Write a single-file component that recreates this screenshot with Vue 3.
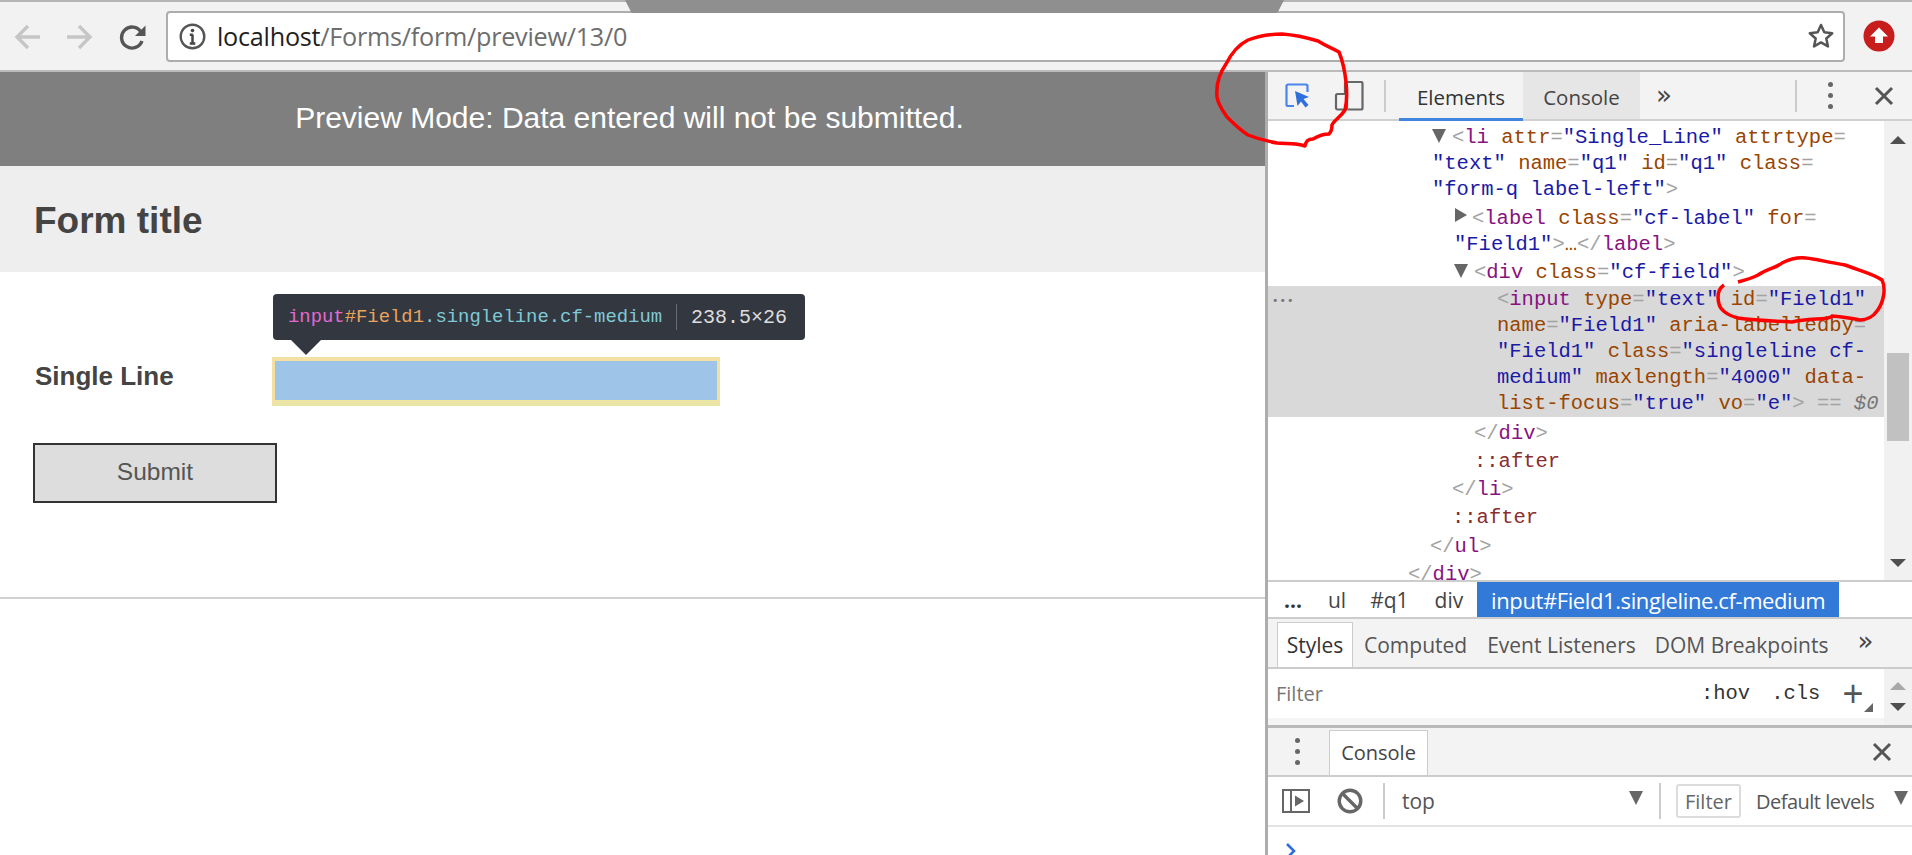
<script setup>
</script>

<template>
  <div class="app">
    <header class="browser">
      <div class="active-tab"></div>
      <svg class="nav first" width="28" height="28" viewBox="0 0 28 28"><path d="M26 14H4M14 3 3 14l11 11" fill="none" stroke="#c6c6c6" stroke-width="3.4"/></svg>
      <svg class="nav fwd" width="28" height="28" viewBox="0 0 28 28"><path d="M2 14h22M14 3l11 11-11 11" fill="none" stroke="#c6c6c6" stroke-width="3.4"/></svg>
      <svg class="nav reload" width="28" height="28" viewBox="0 0 28 28"><path d="M23 18a10.500 10.500 0 1 1-1-9" fill="none" stroke="#555" stroke-width="3.400"/><path d="M26.500 2.500V13h-10.500z" fill="#555"/></svg>
      <div class="omnibox">
        <svg class="info" width="27" height="27" viewBox="0 0 27 27"><circle cx="13.500" cy="13.500" r="11.800" fill="none" stroke="#555" stroke-width="2.400"/><path d="M13.500 11.500v9M10.800 11.800h3M10.800 20.500h5.500" fill="none" stroke="#444" stroke-width="2.500"/><circle cx="13.500" cy="7.500" r="1.800" fill="#444"/></svg>
        <span class="url"><span class="host">localhost</span>/Forms/form/preview/13/0</span>
        <svg class="star" width="28" height="28" viewBox="0 0 28 28"><path d="m14 3 3.300 7.300 7.900.9-5.900 5.300 1.700 7.900L14 20.400l-7 4 1.700-7.900-5.900-5.300 7.900-.9z" fill="none" stroke="#555" stroke-width="2.500" stroke-linejoin="round"/></svg>
      </div>
      <svg class="ext" width="32" height="32" viewBox="0 0 32 32"><circle cx="16" cy="16" r="15.500" fill="#c81d1d"/><path d="M16 7.500 25 16.500h-5V23h-8v-6.500H7z" fill="#fff"/></svg>
    </header>

    <main class="main">
      <section class="page">
        <div class="banner">Preview Mode: Data entered will not be submitted.</div>
        <h1 class="form-title">Form title</h1>
        <form class="form" @submit.prevent>
          <div class="field">
            <label class="label" for="Field1">Single Line</label>
            <div class="input-wrap">
              <div class="tip">
                <span class="t-tag">input</span><span class="t-id">#Field1</span><span class="t-cls">.singleline.cf-medium</span>
                <i class="t-sep"></i>
                <span class="t-size">238.5×26</span>
              </div>
              <input id="Field1" class="input" type="text" />
            </div>
          </div>
          <button class="submit" type="submit">Submit</button>
        </form>
      </section>

      <aside class="devtools">
        <div class="dt-bar">
          <svg class="inspect" width="26" height="26" viewBox="0 0 26 26"><path d="M9 23H3a1.500 1.500 0 0 1-1.500-1.500V3A1.500 1.500 0 0 1 3 1.500h18A1.500 1.500 0 0 1 22.500 3v6" fill="none" stroke="#4a86e8" stroke-width="2.200"/><path d="m10 8 14 6-5.500 2 5 6-3 2.500-4.500-6-3.500 4.500z" fill="#2f6fdc"/></svg>
          <svg class="device" width="30" height="30" viewBox="0 0 30 30"><path d="M11 13V2.500A1.500 1.500 0 0 1 12.500 1H27a1.500 1.500 0 0 1 1.500 1.500V27a1.500 1.500 0 0 1-1.500 1.500H13.500" fill="none" stroke="#666" stroke-width="2.200"/><rect x="2" y="13" width="11" height="15.500" rx="1.500" fill="none" stroke="#666" stroke-width="2.200"/></svg>
          <i class="vsep s1"></i>
          <div class="tab tab-el">Elements</div>
          <div class="tab tab-con">Console</div>
          <span class="more">»</span>
          <i class="vsep s2"></i>
          <span class="kebab"><i></i><i></i><i></i></span>
          <svg class="close c1" width="20" height="20" viewBox="0 0 20 20"><path d="m2 2 16 16M18 2 2 18" stroke="#555" stroke-width="3"/></svg>
        </div>

        <div class="dom-wrap">
          <div class="dom">
            <div class="blk l1"><span class="tri down"></span><b>&lt;</b><u>li</u> <em>attr</em><b>=</b><s>"Single_Line"</s> <em>attrtype</em><b>=</b><br><s>"text"</s> <em>name</em><b>=</b><s>"q1"</s> <em>id</em><b>=</b><s>"q1"</s> <em>class</em><b>=</b><br><s>"form-q label-left"</s><b>&gt;</b></div>
            <div class="blk l2 gap1"><span class="tri right"></span><b>&lt;</b><u>label</u> <em>class</em><b>=</b><s>"cf-label"</s> <em>for</em><b>=</b><br><s>"Field1"</s><b>&gt;</b><em>…</em><b>&lt;/</b><u>label</u><b>&gt;</b></div>
            <div class="blk l2"><span class="tri down"></span><b>&lt;</b><u>div</u> <em>class</em><b>=</b><s>"cf-field"</s><b>&gt;</b></div>
            <div class="blk l3 selected">
              <span class="gutter">•••</span>
              <b>&lt;</b><u>input</u> <em>type</em><b>=</b><s>"text"</s> <em>id</em><b>=</b><s>"Field1"</s><br><em>name</em><b>=</b><s>"Field1"</s> <em>aria-labelledby</em><b>=</b><br><s>"Field1"</s> <em>class</em><b>=</b><s>"singleline cf-</s><br><s>medium"</s> <em>maxlength</em><b>=</b><s>"4000"</s> <em>data-</em><br><em>list-focus</em><b>=</b><s>"true"</s> <em>vo</em><b>=</b><s>"e"</s><b>&gt;</b> <b>==</b> <span class="dollar">$0</span>
            </div>
            <div class="blk l2b"><b>&lt;/</b><u>div</u><b>&gt;</b></div>
            <div class="blk l2b"><span class="pseudo">::after</span></div>
            <div class="blk l1b"><b>&lt;/</b><u>li</u><b>&gt;</b></div>
            <div class="blk l1b"><span class="pseudo">::after</span></div>
            <div class="blk l0 gap1"><b>&lt;/</b><u>ul</u><b>&gt;</b></div>
            <div class="blk lm"><b>&lt;/</b><u>div</u><b>&gt;</b></div>
          </div>
          <div class="scroll">
            <i class="arr up"></i>
            <i class="thumb"></i>
            <i class="arr dn"></i>
          </div>
        </div>

        <nav class="crumbs">
          <span class="cr dots">...</span>
          <span class="cr ul">ul</span>
          <span class="cr q">#q1</span>
          <span class="cr dv">div</span>
          <span class="cr active">input#Field1.singleline.cf-medium</span>
        </nav>

        <div class="subtabs">
          <div class="st st-active">Styles</div>
          <div class="st st-c">Computed</div>
          <div class="st st-e">Event Listeners</div>
          <div class="st st-d">DOM Breakpoints</div>
          <span class="more st-more">»</span>
        </div>

        <div class="filter-row">
          <span class="filter">Filter</span>
          <span class="hov">:hov</span>
          <span class="cls">.cls</span>
          <span class="plus">+</span>
          <i class="corner"></i>
          <div class="mini-scroll"><i class="arr up gray"></i><i class="arr dn"></i></div>
        </div>

        <div class="drawer-head">
          <span class="kebab k2"><i></i><i></i><i></i></span>
          <div class="drawer-tab">Console</div>
          <svg class="close c2" width="20" height="20" viewBox="0 0 20 20"><path d="m2 2 16 16M18 2 2 18" stroke="#555" stroke-width="3"/></svg>
        </div>

        <div class="con-bar">
          <svg class="side" width="28" height="24" viewBox="0 0 28 24"><rect x="1" y="1" width="26" height="22" fill="none" stroke="#666" stroke-width="2"/><path d="M9 1v22" stroke="#666" stroke-width="2"/><path d="M13 6.500 22 12l-9 5.500z" fill="#666"/></svg>
          <svg class="block" width="26" height="26" viewBox="0 0 26 26"><circle cx="13" cy="13" r="10.800" fill="none" stroke="#666" stroke-width="3.400"/><path d="m5.500 5.500 15 15" stroke="#666" stroke-width="3.400"/></svg>
          <i class="vsep s3"></i>
          <span class="top">top</span>
          <i class="caret c-top"></i>
          <i class="vsep s4"></i>
          <span class="con-filter">Filter</span>
          <span class="levels">Default levels</span>
          <i class="caret c-lev"></i>
        </div>

        <div class="prompt"><svg width="12" height="18" viewBox="0 0 12 18"><path d="m2 2 7 7-7 7" fill="none" stroke="#2f6fdc" stroke-width="2.600"/></svg></div>
      </aside>
    </main>

    <svg class="marks" width="1912" height="855" viewBox="0 0 1912 855">
      <path d="M1226 64C1232 52 1240 44 1248 40 1258 36 1270 34 1282 34 1296 35 1308 38 1318 41 1326 46 1332 48 1339 52 1343 62 1345 72 1346 82 1347 92 1347 102 1345 110 1340 118 1334 120 1332 125 1332 129 1331 132 1329 134 1322 134 1318 136 1313 139 1309 139 1306 140 1305 146 1296 143 1285 144 1277 143 1266 141 1258 139 1248 135 1240 130 1234 124 1227 117 1222 110 1218 104 1217 97 1216 86 1219 74 1226 64Z" fill="none" stroke="#f00" stroke-width="3.500" stroke-linejoin="round"/>
      <path d="M1738 282C1746 280 1750 279 1758 275 1768 268 1776 268 1782 263 1790 259 1798 257 1806 258 1816 259 1826 262 1845 265 1858 270 1874 274 1882 280 1886 288 1884 302 1877 311 1873 317 1866 320 1860 320 1850 318 1842 317 1832 316 1830 320 1810 318 1792 322 1770 321 1752 320 1738 318 1726 315 1720 309 1719 304 1717 296 1718 289 1724 285 1730 283 1738 282Z" fill="none" stroke="#f00" stroke-width="3.500" stroke-linejoin="round"/>
    </svg>
  </div>
</template>

<style scoped>
.app { position: relative; width: 1912px; height: 855px; overflow: hidden; background: #fff; display: flex; flex-direction: column; font-family: "Open Sans", "Liberation Sans", sans-serif; }

.browser { position: relative; flex: none; height: 72px; box-sizing: border-box; display: flex; align-items: center; background: #f2f2f2; border-top: 2px solid #b5b5b5; border-bottom: 2px solid #bbb; }
.active-tab { position: absolute; left: 625px; top: -2px; width: 659px; height: 13px; background: #8f8f8f; clip-path: polygon(0 0, 100% 0, 99% 100%, 1% 100%); }
.nav { flex: none; margin-left: 10px; margin-top: 2px; }
.nav.first { margin-left: 14px; }
.nav.fwd { margin-left: 23px; }
.nav.reload { margin-left: 26px; }
.omnibox { flex: none; margin-left: 19px; width: 1679px; height: 51px; box-sizing: border-box; border: 2px solid #adadad; border-radius: 4px; background: #fff; display: flex; align-items: center; padding-left: 11px; }
.url { margin-left: 11px; font-size: 25.200px; color: #6d6d6d; white-space: nowrap; letter-spacing: -0.250px; }
.host { color: #1f1f1f; }
.star { margin-left: auto; margin-right: 8px; }
.ext { flex: none; margin-left: 18px; }

.main { flex: 1; min-height: 0; display: flex; }
.page { flex: none; width: 1265px; display: flex; flex-direction: column; }
.banner { flex: none; height: 94px; box-sizing: border-box; padding: 0 6px 2px 0; display: flex; align-items: center; justify-content: center; background: #7f7f7f; color: #fff; font: 400 30px "Liberation Sans", Arial, sans-serif; }
.form-title { flex: none; margin: 0; height: 106px; box-sizing: border-box; padding: 3px 0 0 34px; display: flex; align-items: center; background: #eee; color: #444; font: 700 37px "Liberation Sans", Arial, sans-serif; }
.form { flex: none; height: 327px; box-sizing: border-box; border-bottom: 2px solid #d0d0d0; padding: 85px 0 0 33px; }
.field { display: flex; align-items: flex-start; }
.label { width: 236px; padding: 3px 0 0 2px; box-sizing: border-box; font: 700 26px/32px "Liberation Sans", Arial, sans-serif; color: #444; }
.input-wrap { position: relative; margin-left: 3px; }
.input { display: block; width: 448px; height: 49px; box-sizing: border-box; margin: 0; padding: 0; outline: 0; background: #9ec5e8; border: 4px solid #f3e0a2; border-left-width: 3px; border-right-width: 3px; border-bottom: 6px solid #ece6a6; border-radius: 0; }
.tip { position: absolute; left: 1px; top: -63px; width: 532px; height: 46px; box-sizing: border-box; padding-left: 15px; display: flex; align-items: center; border-radius: 4px; background: #333740; font: 400 18.900px "Liberation Mono", monospace; white-space: nowrap; }
.tip::after { content: ""; position: absolute; left: 18px; top: 46px; width: 0; height: 0; border-left: 15px solid transparent; border-right: 15px solid transparent; border-top: 15px solid #333740; }
.t-tag { color: #e26ad0; }
.t-id { color: #eba45c; }
.t-cls { color: #7fc9d6; }
.t-sep { width: 1px; height: 26px; margin: 0 14px; background: #666a72; }
.t-size { color: #ddd; font-size: 20px; }
.submit { display: block; margin-top: 37px; width: 244px; height: 60px; box-sizing: border-box; padding: 0 0 3px; background: #ddd; border: 2px solid #333; border-radius: 0; color: #555; font: 400 24.500px "Liberation Sans", Arial, sans-serif; }

.devtools { flex: 1; min-width: 0; box-sizing: border-box; border-left: 3px solid #adadad; display: flex; flex-direction: column; color: #444; }
.dt-bar { flex: none; height: 49px; box-sizing: border-box; display: flex; align-items: center; background: #f3f3f3; border-bottom: 2px solid #d0d0d0; font-size: 20.500px; }
.inspect { flex: none; margin-left: 17px; margin-top: 1px; }
.device { flex: none; margin-left: 23px; margin-top: 1px; }
.vsep { flex: none; width: 2px; background: #ccc; }
.s1 { height: 32px; margin-left: 20px; }
.s2 { height: 32px; margin-left: 119px; }
.tab { flex: none; align-self: stretch; box-sizing: border-box; height: 49px; padding-top: 3px; display: flex; align-items: center; justify-content: center; color: #333; }
.tab-el { margin-left: 13px; width: 124px; border-bottom: 3px solid #4285e0; }
.tab-con { width: 117px; background: #e6e6e6; height: 47px; color: #444; }
.more { flex: none; font: 400 26px "DejaVu Sans", sans-serif; color: #444; margin-left: 16px; margin-top: -2px; width: 20px; }
.kebab { flex: none; display: flex; flex-direction: column; gap: 6px; margin-left: 31px; }
.kebab i { display: block; width: 5px; height: 5px; border-radius: 50%; background: #666; }
.close { flex: none; }
.c1 { margin-left: 41px; }

.dom-wrap { flex: none; height: 459px; display: flex; overflow: hidden; }
.dom { flex: 1; min-width: 0; display: flex; flex-direction: column; gap: 2px; padding-top: 4px; font: 400 20.500px/26px "Liberation Mono", monospace; white-space: pre; color: #444; }
.blk { flex: none; position: relative; }
.dom b { font-weight: 400; color: #a3a3a3; }
.dom u { text-decoration: none; color: #881280; }
.dom em { font-style: normal; color: #994500; }
.dom s { text-decoration: none; color: #1a1aa6; }
.pseudo { color: #8a2d2d; }
.dollar { font-style: italic; color: #777; }
.gap1 { margin-top: 1px; }
.l1 { padding-left: 164px; }
.l2 { padding-left: 186px; }
.l3 { padding-left: 229px; }
.l2b { padding-left: 206px; }
.l1b { padding-left: 184px; }
.l0 { padding-left: 162px; }
.lm { padding-left: 140px; }
.selected { width: 616px; box-sizing: border-box; background: #d9d9d9; margin-top: -2px; margin-bottom: 2px; padding-top: 1px; }
.gutter { position: absolute; left: 4px; top: 2px; font: 400 11px/26px "DejaVu Sans", sans-serif; letter-spacing: 1px; color: #777; }
.tri { display: inline-block; width: 0; height: 0; }
.tri.down { margin-right: 20px; position: relative; }
.tri.right { margin-right: 18px; position: relative; }
.tri.down::before { content: ""; position: absolute; left: 0; top: -14px; border-left: 7px solid transparent; border-right: 7px solid transparent; border-top: 14px solid #666; }
.tri.right::before { content: ""; position: absolute; left: 1px; top: -16px; border-top: 7px solid transparent; border-bottom: 7px solid transparent; border-left: 12px solid #666; }
.scroll { flex: none; width: 28px; background: #f1f1f1; position: relative; display: flex; flex-direction: column; align-items: center; }
.arr { display: block; width: 0; height: 0; border-left: 8px solid transparent; border-right: 8px solid transparent; }
.arr.up { border-bottom: 8px solid #505050; }
.arr.dn { border-top: 8px solid #505050; }
.arr.gray { border-bottom-color: #a8a8a8; }
.scroll .up { margin-top: 15px; }
.thumb { display: block; width: 22px; height: 88px; margin-top: 209px; background: #c1c1c1; }
.scroll .dn { margin-top: 118px; }

.crumbs { flex: none; height: 39px; box-sizing: border-box; display: flex; align-items: stretch; border-top: 2px solid #ccc; border-bottom: 2px solid #ccc; font-size: 21px; color: #444; background: #fff; }
.cr { display: flex; align-items: center; }
.dots { margin-left: 16px; font-weight: 700; color: #333; }
.ul { margin-left: 26px; }
.q { margin-left: 24px; }
.dv { margin-left: 26px; }
.active { margin-left: 14px; width: 362px; justify-content: center; background: #3279d8; color: #fff; font-size: 22px; letter-spacing: -0.400px; white-space: nowrap; }

.subtabs { flex: none; height: 50px; box-sizing: border-box; display: flex; align-items: flex-end; background: #f3f3f3; border-bottom: 2px solid #ccc; font-size: 21px; color: #555; }
.st { height: 45px; box-sizing: border-box; display: flex; align-items: center; white-space: nowrap; }
.st-active { margin-left: 9px; width: 76px; justify-content: center; background: #fff; border: 1px solid #ccc; border-bottom: 0; color: #333; }
.st-c { margin-left: 11px; }
.st-e { margin-left: 20px; }
.st-d { margin-left: 19px; }
.st-more { align-self: center; margin-left: 29px; margin-top: -4px; }

.filter-row { position: relative; flex: none; height: 59px; box-sizing: border-box; display: flex; background: #fff; border-bottom: 3px solid #b9b9b9; padding-bottom: 7px; }
.filter-row::after { content: ""; position: absolute; left: 0; right: 28px; bottom: 0; height: 7px; background: #f5f5f5; }
.filter { margin-left: 8px; align-self: center; font-size: 20px; color: #777; }
.hov, .cls { align-self: center; font: 400 20.500px "Liberation Mono", monospace; color: #333; }
.hov { margin-left: 378px; }
.cls { margin-left: 21px; }
.plus { align-self: center; margin-left: 22px; font: 400 36px/1 "Liberation Sans", sans-serif; color: #555; }
.corner { position: absolute; left: 596px; top: 34px; width: 0; height: 0; border-left: 9px solid transparent; border-bottom: 9px solid #666; }
.mini-scroll { position: absolute; right: 0; top: 0; bottom: 0; width: 28px; background: #f1f1f1; display: flex; flex-direction: column; align-items: center; gap: 13px; padding-top: 13px; box-sizing: border-box; z-index: 1; }

.drawer-head { flex: none; height: 49px; box-sizing: border-box; display: flex; align-items: flex-end; background: #f3f3f3; border-bottom: 2px solid #ccc; }
.k2 { align-self: center; margin-left: 27px; gap: 6px; }
.drawer-tab { margin-left: 29px; width: 99px; height: 45px; box-sizing: border-box; padding-bottom: 2px; display: flex; align-items: center; justify-content: center; background: #fff; border: 1px solid #ccc; border-bottom: 0; font-size: 20px; color: #444; }
.c2 { align-self: center; margin-left: 444px; }

.con-bar { position: relative; flex: none; height: 50px; box-sizing: border-box; display: flex; align-items: center; border-bottom: 2px solid #e4e4e4; font-size: 20px; color: #555; }
.side { flex: none; margin-left: 14px; }
.block { flex: none; margin-left: 27px; }
.s3 { height: 36px; margin-left: 20px; }
.top { margin-left: 17px; font-size: 21px; color: #555; }
.caret { flex: none; width: 0; height: 0; border-left: 7px solid transparent; border-right: 7px solid transparent; border-top: 14px solid #666; margin-top: -6px; }
.c-top { margin-left: 194px; }
.s4 { height: 36px; margin-left: 16px; }
.con-filter { flex: none; margin-left: 15px; width: 65px; height: 34px; box-sizing: border-box; display: flex; align-items: center; justify-content: center; border: 2px solid #dcdcdc; border-radius: 3px; color: #666; }
.levels { margin-left: 15px; white-space: nowrap; letter-spacing: -0.500px; }
.c-lev { margin-left: 20px; }

.prompt { flex: 1; padding: 15px 0 0 17px; box-sizing: border-box; }

.marks { position: absolute; left: 0; top: 0; pointer-events: none; }
</style>
